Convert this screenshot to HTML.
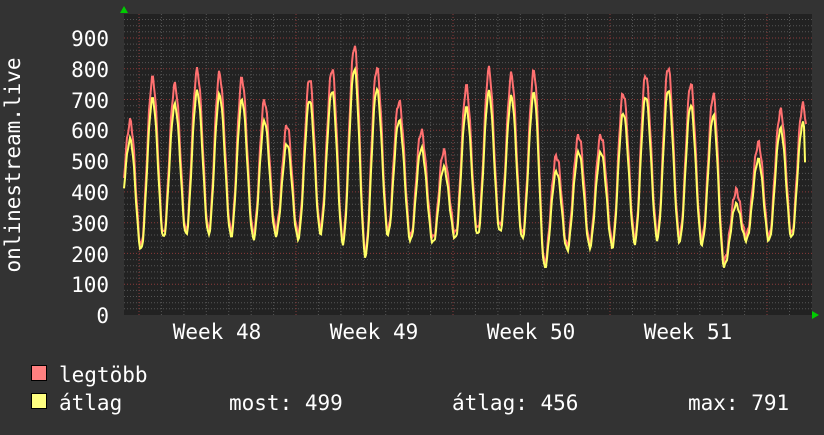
<!DOCTYPE html>
<html><head><meta charset="utf-8"><style>
body{margin:0;background:#333333;width:824px;height:430px;overflow:hidden}
svg text{font-family:"DejaVu Sans Mono","Liberation Mono",monospace;font-size:21px;fill:#fff}
</style></head><body>
<svg id="s" width="824" height="430" xmlns="http://www.w3.org/2000/svg">
<rect width="824" height="430" fill="#333"/>
<rect x="124" y="14" width="688" height="301" fill="#222"/>
<g id="grid"></g>
<path id="pmax" fill="none" stroke="#ff7070" stroke-width="2"/>
<path id="pavg" fill="none" stroke="#ffff66" stroke-width="2"/>
<polygon points="120,13 128,13 124,6" fill="#00cc00"/>
<polygon points="812,311 812,319 819,315" fill="#00cc00"/>
<g text-anchor="end">
<text x="109" y="46">900</text><text x="109" y="77">800</text><text x="109" y="108">700</text>
<text x="109" y="138">600</text><text x="109" y="169">500</text><text x="109" y="200">400</text>
<text x="109" y="231">300</text><text x="109" y="262">200</text><text x="109" y="292">100</text>
<text x="109" y="323">0</text></g>
<g text-anchor="middle">
<text x="217" y="339">Week 48</text><text x="374" y="339">Week 49</text>
<text x="531" y="339">Week 50</text><text x="688" y="339">Week 51</text></g>
<text transform="translate(20,165) rotate(-90)" text-anchor="middle">onlinestream.live</text>
<rect x="31.5" y="365.5" width="15" height="15" fill="#ff8080" stroke="#000"/>
<rect x="31.5" y="393.5" width="15" height="15" fill="#ffff80" stroke="#000"/>
<text x="59" y="382">legtöbb</text>
<text x="59" y="410">átlag</text>
<text x="229" y="410">most: 499</text>
<text x="452" y="410">átlag: 456</text>
<text x="688" y="410">max: 791</text>
</svg>
<script>
var g=document.getElementById('grid'),h='';
function Y(v){return 315-v*0.3078;}
for(var v=20;v<=960;v+=20){var y=Y(v).toFixed(1);var maj=v%100==0;
h+='<line x1="124" x2="812" y1="'+y+'" y2="'+y+'" stroke="'+(maj?'#8a3a3a':'#555')+'" stroke-dasharray="1,2"/>';}
for(var d=-1;d<32;d++){var x=139+d*22.43;if(x<125||x>811)continue;var maj=((d%7)+7)%7==0;
h+='<line y1="14" y2="315" x1="'+x.toFixed(1)+'" x2="'+x.toFixed(1)+'" stroke="'+(maj?'#8a3a3a':'#555')+'" stroke-dasharray="1,2"/>';}
g.innerHTML=h;
var pk=[630,775,755,800,785,765,690,610,765,800,880,810,700,600,530,735,790,775,790,520,590,590,725,780,800,745,710,400,560,670,690];
var tr=[300,230,270,280,280,270,260,270,260,280,250,210,280,260,250,260,270,280,260,170,230,240,240,250,260,250,240,170,260,260,270];
var pm='',pa='';
for(var x=124;x<=806;x++){
 var t=(x-130)/22.43; var i=Math.round(t); var ph=t-i;
 var ii=Math.max(0,Math.min(30,i));
 var jj=Math.max(0,Math.min(30,ph>0?ii+1:ii));
 var P=pk[ii], T=ph>0?tr[jj]:tr[ii];
 var f=Math.pow((1+Math.cos(ph*2*Math.PI))/2,1.0);
 var n=Math.sin(x*1.7)*12+Math.sin(x*0.53)*8;
 var vm=T+(P-T)*f+n;
 var va=T-15+(P*0.93-T)*f+n*0.6;
 if(x>=805){va=499;}
 pm+=(x==124?'M':'L')+x+','+Y(vm).toFixed(1);
 pa+=(x==124?'M':'L')+x+','+Y(va).toFixed(1);
}
document.getElementById('pmax').setAttribute('d',pm);
document.getElementById('pavg').setAttribute('d',pa);
</script>
</body></html>
